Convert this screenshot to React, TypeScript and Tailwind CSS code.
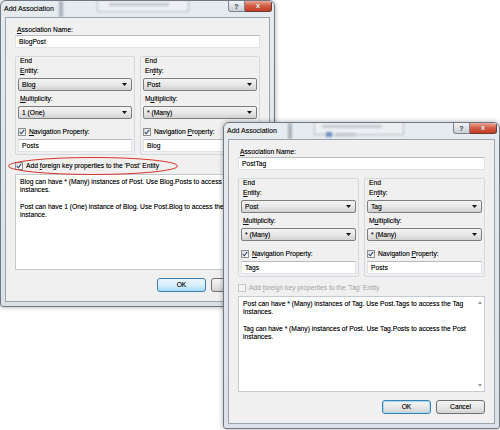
import React from "react";

const U = ({ children }: { children: React.ReactNode }) => (
  <span className="underline decoration-[0.6px] underline-offset-[1px]">{children}</span>
);

function Check({ checked, disabled }: { checked?: boolean; disabled?: boolean }) {
  return (
    <span
      className={
        disabled
          ? "w-[8px] h-[8px] shrink-0 border border-[#c4c6c8] bg-[#f5f5f5]"
          : "w-[8px] h-[8px] shrink-0 border border-[#8e8f8f] bg-gradient-to-br from-[#d8d8d8] to-[#ffffff] flex items-center justify-center"
      }
    >
      {checked && (
        <svg viewBox="0 0 8 8" className="w-[6px] h-[6px]">
          <path d="M1 4.3 L3.1 6.4 L7 1.2" fill="none" stroke="#2b4770" strokeWidth="1.4" />
        </svg>
      )}
    </span>
  );
}

function Combo({ value }: { value: string }) {
  return (
    <div className="h-[13px] rounded-[2px] border border-[#7e7e7e] bg-gradient-to-b from-[#f3f3f3] via-[#e8e8e8] to-[#d2d2d2] flex items-center pl-[3px] pr-[4px]">
      <span className="flex-1 leading-[8px]">{value}</span>
      <svg width="5" height="3" viewBox="0 0 5 3">
        <path d="M0 0H5L2.5 3Z" fill="#111" />
      </svg>
    </div>
  );
}

function TextBox({ value }: { value: string }) {
  return (
    <div className="h-[13px] border border-[#dfe3e8] border-t-[#b7bcc2] bg-white flex items-center pl-[3px] leading-[8px]">
      {value}
    </div>
  );
}

type EndData = {
  entityLabel: React.ReactNode;
  entity: string;
  multLabel: React.ReactNode;
  mult: string;
  navLabel: React.ReactNode;
  nav: string;
};

function EndGroup({ d }: { d: EndData }) {
  return (
    <div className="flex-1 border border-[#d3d9df] rounded-[2px] px-[2px] pb-[2px] flex flex-col">
      <div className="leading-[7px] pl-[2px]">End</div>
      <div className="mt-[3px] leading-[8px] pl-[2px]">{d.entityLabel}</div>
      <div className="mt-[3px]">
        <Combo value={d.entity} />
      </div>
      <div className="mt-[4px] leading-[8px] pl-[2px]">{d.multLabel}</div>
      <div className="mt-[3px]">
        <Combo value={d.mult} />
      </div>
      <div className="mt-[8px] h-[9px] flex items-center gap-[3px]">
        <Check checked />
        <span className="leading-[8px]">{d.navLabel}</span>
      </div>
      <div className="mt-[3px]">
        <TextBox value={d.nav} />
      </div>
    </div>
  );
}

type DialogData = {
  name: string;
  left: EndData;
  right: EndData;
  fkLabel: React.ReactNode;
  fkEnabled: boolean;
  lines: string[][];
  okHover: boolean;
  scroll: boolean;
};

function TitleBackdrop({ variant }: { variant: number }) {
  if (variant === 1) {
    return (
      <>
        <div className="absolute left-[58px] top-0 w-[4px] h-[16px] bg-[#a9b1b9] blur-[1px]" />
        <div className="absolute left-[96px] top-[-2px] w-[92px] h-[13px] border border-[#b4bcc4] bg-[#edf0f3] blur-[1px]" />
        <div className="absolute left-[108px] top-[2px] w-[60px] h-[3px] bg-[#c3c9cf] blur-[1px]" />
      </>
    );
  }
  return (
    <>
      <div className="absolute left-[64px] top-0 w-[4px] h-[16px] bg-[#a9b1b9] blur-[1px]" />
      <div className="absolute left-[90px] top-[-2px] w-[90px] h-[14px] border border-[#b4bcc4] bg-[#edf0f3] blur-[1px]" />
      <div className="absolute left-[98px] top-[2px] w-[60px] h-[3px] bg-[#c3c9cf] blur-[1px]" />
      <div className="absolute left-[102px] top-[9px] w-[6px] h-[5px] bg-[#6f93c3] blur-[1px]" />
      <div className="absolute left-[112px] top-[10px] w-[20px] h-[3px] bg-[#c3c9cf] blur-[1px]" />
    </>
  );
}

function Dialog({ d, className, variant }: { d: DialogData; className: string; variant: number }) {
  return (
    <div
      className={
        "absolute h-[307px] rounded-t-[6px] rounded-b-[3px] border border-[#6f7983] bg-gradient-to-b from-[#e6ebf0] to-[#dbe1e7] flex flex-col shadow-[0_0_5px_rgba(0,0,0,0.35)] " +
        className
      }
    >
      <div className="relative h-[16px] flex items-start pl-[3px] pr-[2px] overflow-hidden rounded-t-[6px]">
        <TitleBackdrop variant={variant} />
        <span className="relative self-center text-[7px] leading-[8px] text-[#1b1b1b]">Add Association</span>
        <div className="relative ml-auto flex">
          <div className="w-[17px] h-[11px] rounded-bl-[3px] border border-t-0 border-[#7c858e] bg-gradient-to-b from-[#f2f4f6] to-[#c8cfd6] flex items-center justify-center text-[7px] leading-[7px] text-[#5d6874] font-bold">
            ?
          </div>
          <div className="w-[27px] h-[11px] rounded-br-[3px] border border-t-0 border-l-0 border-[#6d3a33] bg-gradient-to-b from-[#e9a797] via-[#d25a43] to-[#c23c23] flex items-center justify-center text-[8px] leading-[8px] text-white font-bold [text-shadow:0_0_1px_#5a1a10]">
            x
          </div>
        </div>
      </div>
      <div className="flex-1 px-[4px] pb-[4px] flex">
        <div className="flex-1 border border-[#9aa4ae] bg-[#f0f0f0] px-[9px] pt-[8px] flex flex-col text-[#0e0e0e]">
          <div className="leading-[8px] pl-[2px]">
            <U>A</U>ssociation Name:
          </div>
          <div className="mt-[1px]">
            <TextBox value={d.name} />
          </div>
          <div className="mt-[8px] flex gap-[5px]">
            <EndGroup d={d.left} />
            <EndGroup d={d.right} />
          </div>
          <div className="mt-[7px] h-[8px] flex items-center gap-[3px]">
            <Check checked={d.fkEnabled} disabled={!d.fkEnabled} />
            <span className={d.fkEnabled ? "leading-[8px]" : "leading-[8px] text-[#a3a3a3] [text-shadow:none]"}>{d.fkLabel}</span>
          </div>
          <div className="mt-[4px] h-[96px] border border-[#c3cad1] bg-white flex">
            <div className="flex-1 pl-[4px] pt-[3px] leading-[8.3px] whitespace-nowrap overflow-hidden">
              {d.lines.map((para, i) => (
                <div key={i} className={i > 0 ? "mt-[8.3px]" : ""}>
                  {para.map((l, j) => (
                    <div key={j}>{l}</div>
                  ))}
                </div>
              ))}
            </div>
            {d.scroll && (
              <div className="w-[9px] flex flex-col justify-between items-center pt-[4px] pb-[4px]">
                <svg width="4" height="3" viewBox="0 0 4 3">
                  <path d="M0 3H4L2 0Z" fill="#9c9c9c" />
                </svg>
                <svg width="4" height="3" viewBox="0 0 4 3">
                  <path d="M0 0H4L2 3Z" fill="#9c9c9c" />
                </svg>
              </div>
            )}
          </div>
          <div className="mt-[8px] flex justify-end gap-[5px]">
            <div
              className={
                d.okHover
                  ? "w-[49px] h-[14px] rounded-[3px] border border-[#3c7fb1] bg-gradient-to-b from-[#eaf6fd] via-[#d9f0fc] to-[#a7d9f5] flex items-center justify-center leading-[8px]"
                  : "w-[49px] h-[14px] rounded-[3px] border border-[#3c7fb1] bg-gradient-to-b from-[#f4f4f4] via-[#e8e8e8] to-[#d2d2d2] shadow-[inset_0_0_0_1px_#a8d8f3] flex items-center justify-center leading-[8px]"
              }
            >
              OK
            </div>
            <div className="w-[49px] h-[14px] rounded-[3px] border border-[#707070] bg-gradient-to-b from-[#f4f4f4] via-[#e8e8e8] to-[#d2d2d2] flex items-center justify-center leading-[8px]">
              Cancel
            </div>
          </div>
        </div>
      </div>
    </div>
  );
}

const d1: DialogData = {
  name: "BlogPost",
  left: {
    entityLabel: (
      <>
        <U>E</U>ntity:
      </>
    ),
    entity: "Blog",
    multLabel: (
      <>
        <U>M</U>ultiplicity:
      </>
    ),
    mult: "1 (One)",
    navLabel: (
      <>
        <U>N</U>avigation Property:
      </>
    ),
    nav: "Posts",
  },
  right: {
    entityLabel: (
      <>
        En<U>t</U>ity:
      </>
    ),
    entity: "Post",
    multLabel: (
      <>
        M<U>u</U>ltiplicity:
      </>
    ),
    mult: "* (Many)",
    navLabel: (
      <>
        Navigation <U>P</U>roperty:
      </>
    ),
    nav: "Blog",
  },
  fkLabel: (
    <>
      Add <U>f</U>oreign key properties to the 'Post' Entity
    </>
  ),
  fkEnabled: true,
  lines: [
    ["Blog can have * (Many) instances of Post. Use Blog.Posts to access the Post", "instances."],
    ["Post can have 1 (One) instance of Blog. Use Post.Blog to access the Blog", "instance."],
  ],
  okHover: true,
  scroll: false,
};

const d2: DialogData = {
  name: "PostTag",
  left: {
    entityLabel: (
      <>
        <U>E</U>ntity:
      </>
    ),
    entity: "Post",
    multLabel: (
      <>
        <U>M</U>ultiplicity:
      </>
    ),
    mult: "* (Many)",
    navLabel: (
      <>
        <U>N</U>avigation Property:
      </>
    ),
    nav: "Tags",
  },
  right: {
    entityLabel: (
      <>
        En<U>t</U>ity:
      </>
    ),
    entity: "Tag",
    multLabel: (
      <>
        M<U>u</U>ltiplicity:
      </>
    ),
    mult: "* (Many)",
    navLabel: (
      <>
        Navigation <U>P</U>roperty:
      </>
    ),
    nav: "Posts",
  },
  fkLabel: (
    <>
      Add <U>f</U>oreign key properties to the 'Tag' Entity
    </>
  ),
  fkEnabled: false,
  lines: [
    ["Post can have * (Many) instances of Tag. Use Post.Tags to access the Tag", "instances."],
    ["Tag can have * (Many) instances of Post. Use Tag.Posts to access the Post", "instances."],
  ],
  okHover: false,
  scroll: true,
};

export default function App() {
  return (
    <div className="relative w-[500px] h-[430px] bg-white overflow-hidden font-['Liberation_Sans',Arial,sans-serif] text-[6.7px] [text-shadow:0_0_0.4px_rgba(0,0,0,0.55)]">
      <Dialog d={d1} variant={1} className="left-0 top-0 w-[275px]" />
      <svg className="absolute left-[7px] top-[156px]" width="172" height="20" viewBox="0 0 172 20">
        <ellipse cx="86" cy="10" rx="84.5" ry="8.5" fill="none" stroke="#d9352c" strokeWidth="1" />
      </svg>
      <Dialog d={d2} variant={2} className="left-[223px] top-[122px] w-[277px]" />
    </div>
  );
}
